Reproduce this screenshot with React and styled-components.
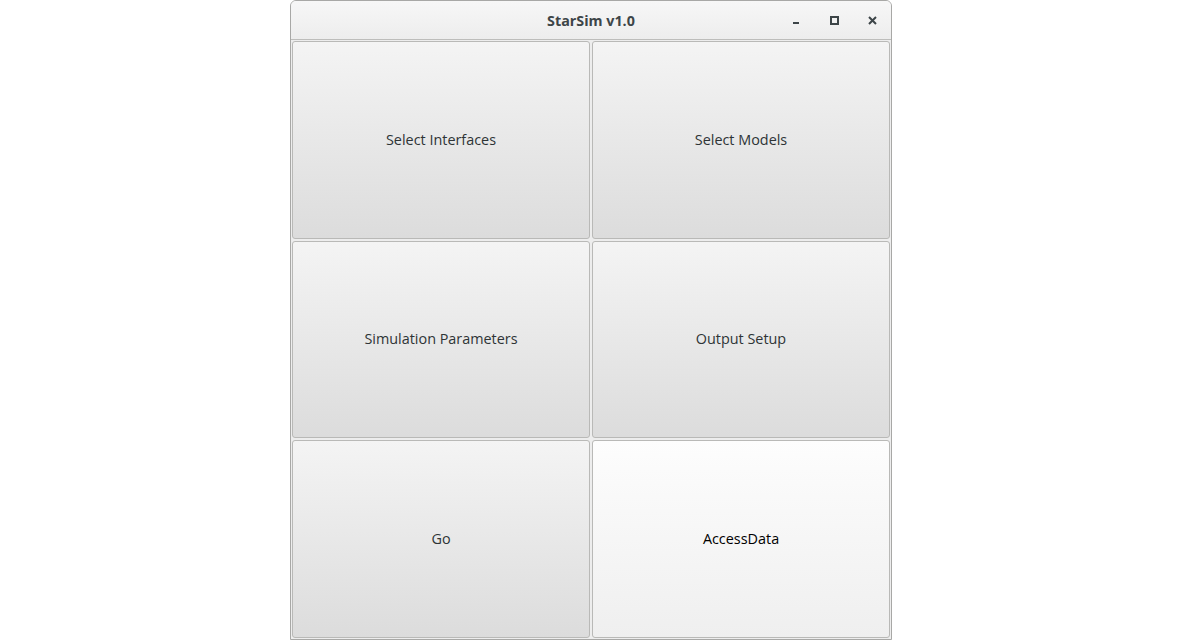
import styled, { createGlobalStyle } from 'styled-components';

const GlobalStyle = createGlobalStyle`
  html, body {
    margin: 0;
    padding: 0;
    background: #ffffff;
    overflow: hidden;
  }
  body {
    font-family: 'Open Sans', 'DejaVu Sans', sans-serif;
  }
`;

const Page = styled.div`
  width: 1182px;
  height: 640px;
  display: flex;
  justify-content: center;
  align-items: flex-start;
`;

const Window = styled.div`
  width: 600px;
  height: 638px;
  border: 1px solid #a8a8a6;
  border-radius: 6px 6px 0 0;
  background: #ededed;
  display: flex;
  flex-direction: column;
  overflow: hidden;
`;

const TitleBar = styled.div`
  height: 38px;
  flex: none;
  position: relative;
  display: flex;
  align-items: center;
  justify-content: center;
  background: linear-gradient(#f7f7f7, #ededed);
  border-bottom: 1px solid #bdbdbb;

  > span {
    font-size: 14.3px;
    font-weight: bold;
    color: #3d4548;
  }
`;

const Controls = styled.div`
  position: absolute;
  right: 9px;
  top: 0;
  bottom: 0;
  display: flex;
  align-items: center;
  gap: 18px;
`;

const ControlButton = styled.div`
  width: 20px;
  height: 20px;
  display: flex;
  align-items: center;
  justify-content: center;
`;

const Grid = styled.div`
  flex: 1;
  padding: 1px;
  display: grid;
  grid-template-columns: 1fr 1fr;
  grid-template-rows: repeat(3, 1fr);
  gap: 2px;
  background: #ededed;
`;

const Button = styled.button`
  border: 1px solid #b9b9b7;
  border-radius: 3px;
  background: ${({ $hover }) =>
    $hover
      ? 'linear-gradient(#fdfdfd, #efefef)'
      : 'linear-gradient(#f4f4f4, #dcdcdc)'};
  color: ${({ $hover }) => ($hover ? '#000000' : '#2e3436')};
  font-family: 'Open Sans', 'DejaVu Sans', sans-serif;
  font-size: 14.4px;
  padding: 0 0 1px;
  margin: 0;
  cursor: pointer;
`;

const items = [
  'Select Interfaces',
  'Select Models',
  'Simulation Parameters',
  'Output Setup',
  'Go',
  'AccessData',
];

export default function App() {
  return (
    <Page>
      <GlobalStyle />
      <Window>
        <TitleBar>
          <span>StarSim v1.0</span>
          <Controls>
            <ControlButton>
              <svg width="8" height="8" viewBox="0 0 8 8">
                <rect x="1" y="6" width="6" height="2" fill="#3d4548" />
              </svg>
            </ControlButton>
            <ControlButton>
              <svg width="9" height="9" viewBox="0 0 9 9">
                <rect x="1" y="1" width="7" height="7" fill="none" stroke="#3d4548" strokeWidth="2" />
              </svg>
            </ControlButton>
            <ControlButton>
              <svg width="9" height="9" viewBox="0 0 9 9">
                <path d="M1 1 L8 8 M8 1 L1 8" stroke="#3d4548" strokeWidth="2" />
              </svg>
            </ControlButton>
          </Controls>
        </TitleBar>
        <Grid>
          {items.map((label) => (
            <Button key={label} $hover={label === 'AccessData'}>
              {label}
            </Button>
          ))}
        </Grid>
      </Window>
    </Page>
  );
}
